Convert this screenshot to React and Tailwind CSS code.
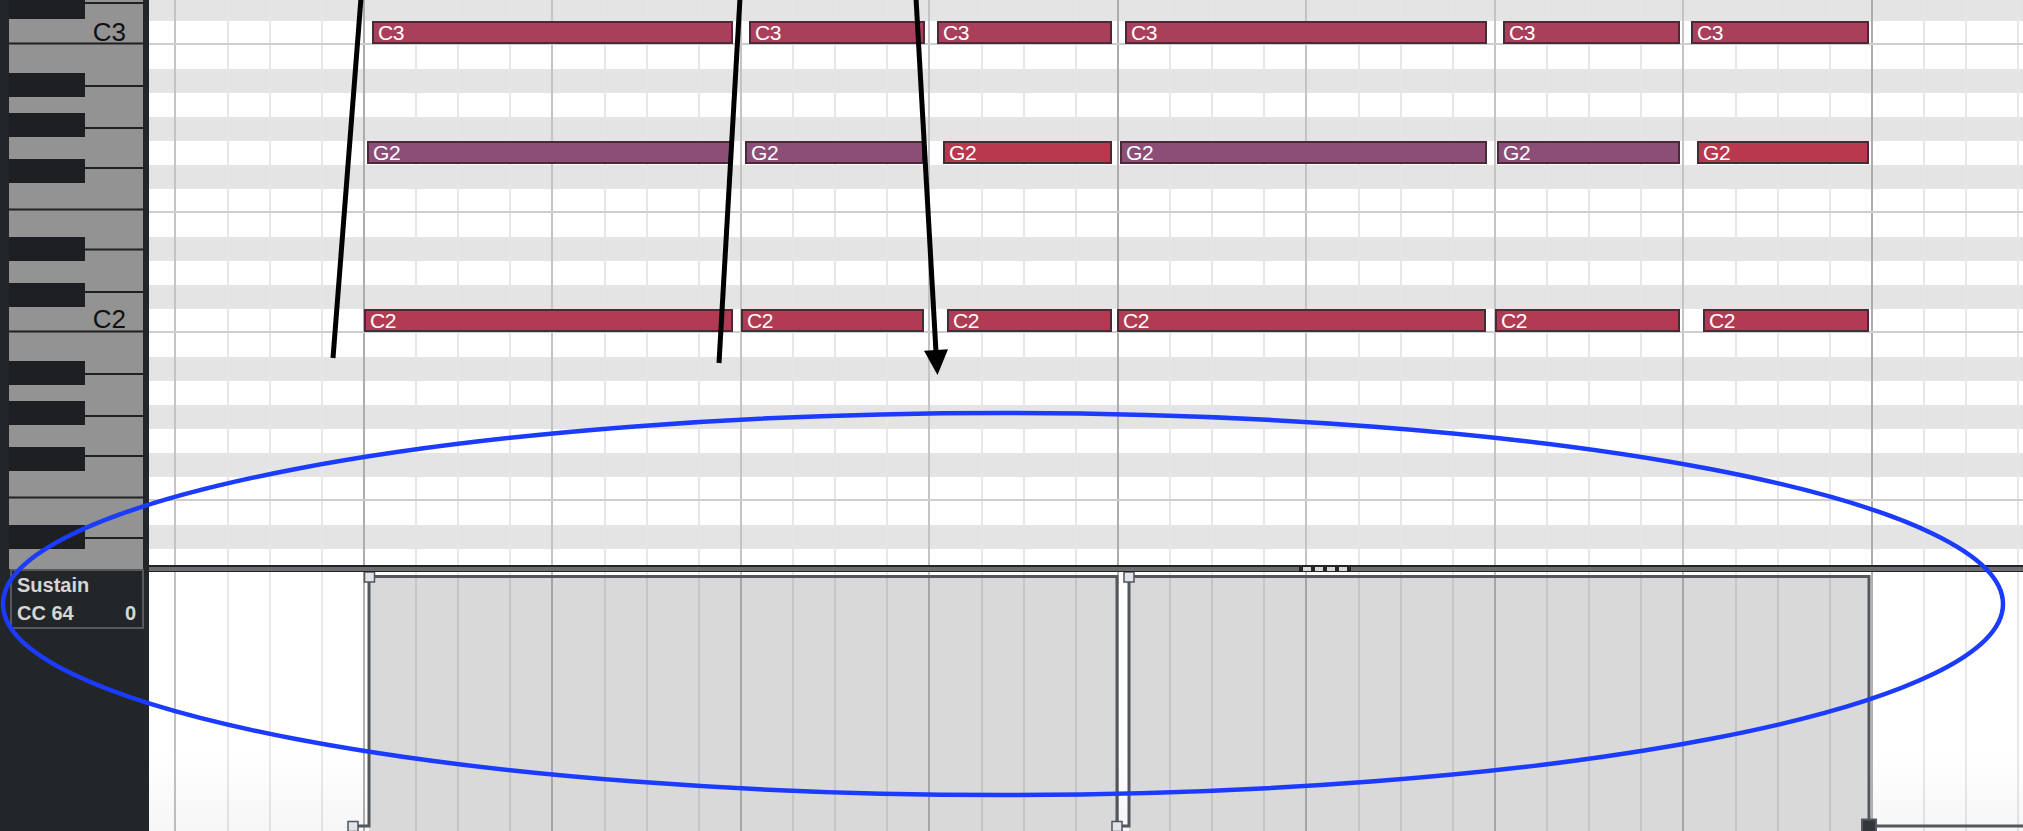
import React from "react"

const GRID_LEFT = 149
const GRID_W = 2023 - GRID_LEFT
const UPPER_H = 565
const LANE_H = 259

// pitch rows, top to bottom (first row is cut by 3px)
const ROWS = [
  "C#3", "C3", "B2", "A#2", "A2", "G#2", "G2", "F#2", "F2", "E2", "D#2", "D2",
  "C#2", "C2", "B1", "A#1", "A1", "G#1", "G1", "F#1", "F1", "E1", "D#1", "D1",
]

const PINK = "bg-[#aa3f5b]"
const PURPLE = "bg-[#8b4e77]"
const RED = "bg-[#b8394e]"
const CRIMSON = "bg-[#b23b54]"

const NOTES = {
  C3: [
    [372, 733, PINK], [749, 925, PINK], [937, 1112, PINK],
    [1125, 1487, PINK], [1503, 1680, PINK], [1691, 1869, PINK],
  ],
  G2: [
    [367, 732, PURPLE], [745, 924, PURPLE], [943, 1112, RED],
    [1120, 1487, PURPLE], [1497, 1680, PURPLE], [1697, 1869, RED],
  ],
  C2: [
    [364, 733, CRIMSON], [741, 924, CRIMSON], [947, 1112, CRIMSON],
    [1117, 1486, CRIMSON], [1495, 1680, CRIMSON], [1703, 1869, CRIMSON],
  ],
}

function buildLines() {
  const out = []
  for (let k = 0; k < 11; k++) {
    const b = 175 + 188.5 * k
    out.push({ x: b, kind: k % 4 === 1 ? "bar" : "beat" })
    for (const o of [52.5, 94.5, 146.5]) out.push({ x: b + o, kind: "sub" })
  }
  return out
    .filter((l) => l.x > GRID_LEFT && l.x < 2026)
    .map((l) => ({ ...l, x: Math.round(l.x - GRID_LEFT) }))
}

const LINES = buildLines()

const UPPER_COLORS = { sub: "#e6e6e6", beat: "#c3c3c3", bar: "#acacac" }
const LANE_ALPHA = { sub: 0.09, beat: 0.24, bar: 0.3 }

const BLACK_KEYS = [-5, 73, 113, 159, 237, 283, 361, 401, 447, 525]
const FULL_KEY_LINES = [43.5, 209.5, 331.5, 497.5]
const SHORT_KEY_LINES = [3, 86, 128, 168, 249.5, 292, 374, 416, 456, 538]

function Piano() {
  return (
    <div className="relative ml-[9px] h-[569px] w-[134px] bg-[#939393]">
      <svg className="absolute inset-0" width={134} height={569}>
        {BLACK_KEYS.map((y) => (
          <rect key={y} x={0} y={y} width={76} height={24} fill="#1e1f22" />
        ))}
        {FULL_KEY_LINES.map((y) => (
          <rect key={y} x={0} y={y - 1} width={134} height={2} fill="#1e2023" />
        ))}
        {SHORT_KEY_LINES.map((y) => (
          <rect key={y} x={76} y={y - 1} width={58} height={2} fill="#1e2023" />
        ))}
      </svg>
      <span className="absolute right-[17px] top-[19px] text-[26px] leading-[26px] text-[#111]">C3</span>
      <span className="absolute right-[17px] top-[306px] text-[26px] leading-[26px] text-[#111]">C2</span>
    </div>
  )
}

function SustainBox() {
  return (
    <div className="ml-[10px] h-[60px] w-[134px] border-2 border-[#56595c] pl-[5px] pr-[6px] text-[20px] font-bold leading-[28px] text-[#d6d6d6]">
      <div>Sustain</div>
      <div className="flex justify-between">
        <span>CC 64</span>
        <span>0</span>
      </div>
    </div>
  )
}

function Note({ from, to, bg, label }) {
  return (
    <div
      className={`absolute top-0 h-[23px] overflow-hidden whitespace-nowrap border-2 border-[#4a2a37] pl-[4px] text-[21px] leading-[20px] tracking-[-0.3px] text-white ${bg}`}
      style={{ left: from - GRID_LEFT, width: to - from }}
    >
      {label}
    </div>
  )
}

function NoteGrid() {
  return (
    <div className="relative h-[565px] overflow-hidden">
      <svg className="absolute inset-0" width={GRID_W} height={UPPER_H}>
        {LINES.map((l) => (
          <rect key={l.x} x={l.x - 1} y={0} width={2} height={UPPER_H} fill={UPPER_COLORS[l.kind]} />
        ))}
        {[45, 213, 333, 501].map((y) => (
          <rect key={y} x={0} y={y - 2} width={GRID_W} height={2} fill="#cdcdcd" />
        ))}
      </svg>
      <div className="mt-[-3px] flex flex-col">
        {ROWS.map((name) => (
          <div key={name} className={`h-[24px] ${name.includes("#") ? "bg-[#e4e4e4]" : "bg-white"}`}>
            <div className="relative z-10 h-full">
              {(NOTES[name] || []).map(([from, to, bg]) => (
                <Note key={from} from={from} to={to} bg={bg} label={name} />
              ))}
            </div>
          </div>
        ))}
      </div>
    </div>
  )
}

function Divider() {
  return (
    <div className="flex h-[7px] border-t-2 border-b border-[#222426] bg-[#6c6e71]">
      <div className="ml-[1150px] flex gap-[4px] bg-[#222426] px-[4px]">
        {[0, 1, 2, 3].map((i) => (
          <div key={i} className="h-[4px] w-[8px] bg-[#d8d8d8]" />
        ))}
      </div>
    </div>
  )
}

function Handle({ x, y, selected }) {
  const s = selected ? 14 : 10
  return (
    <rect
      x={x - s / 2}
      y={y - s / 2}
      width={s}
      height={s}
      fill={selected ? "#33373c" : "#e1e4e8"}
      stroke={selected ? "#55595e" : "#50555b"}
      strokeWidth={selected ? 2 : 1.5}
    />
  )
}

function ControllerLane() {
  const top = 4.5
  const bottom = 254
  return (
    <div className="relative flex-1 overflow-hidden bg-linear-to-b from-white from-70% to-[#f6f6f6]">
      <svg className="block" width={GRID_W} height={LANE_H}>
        <rect x={220} y={top} width={748} height={LANE_H} fill="#d9d9d9" />
        <rect x={980} y={top} width={740} height={LANE_H} fill="#d9d9d9" />
        {LINES.map((l) => (
          <rect key={l.x} x={l.x - 1} y={0} width={2} height={LANE_H} fill="#000" fillOpacity={LANE_ALPHA[l.kind]} />
        ))}
        <path
          d={`M 204 ${bottom} H 220 V ${top} H 968 V ${bottom} H 980 V ${top} H 1720 V ${bottom} H ${GRID_W}`}
          fill="none"
          stroke="#53575c"
          strokeWidth={3}
        />
        <Handle x={204} y={254.5} />
        <Handle x={220.5} y={5} />
        <Handle x={968} y={254.5} />
        <Handle x={980} y={5} />
        <Handle x={1720} y={254.5} selected />
      </svg>
    </div>
  )
}

function Annotations() {
  return (
    <svg className="pointer-events-none absolute inset-0 z-20" width={2023} height={831}>
      <ellipse cx={1003} cy={604} rx={1000} ry={191} fill="none" stroke="#1b3bff" strokeWidth={4.5} />
      <line x1={361} y1={-2} x2={333} y2={358} stroke="#000" strokeWidth={5} />
      <line x1={740} y1={-2} x2={719} y2={363} stroke="#000" strokeWidth={5} />
      <line x1={916} y1={-2} x2={936} y2={352} stroke="#000" strokeWidth={5} />
      <polygon points="924,350.7 948,349.3 937.5,375" fill="#000" />
    </svg>
  )
}

export default function App() {
  return (
    <div className="relative flex h-[831px] w-[2023px] overflow-hidden bg-[#232629] font-['Liberation_Sans',Arial,sans-serif]">
      <div className="flex w-[149px] shrink-0 flex-col bg-[#232629]">
        <Piano />
        <SustainBox />
      </div>
      <div className="flex flex-1 flex-col">
        <NoteGrid />
        <Divider />
        <ControllerLane />
      </div>
      <Annotations />
    </div>
  )
}
